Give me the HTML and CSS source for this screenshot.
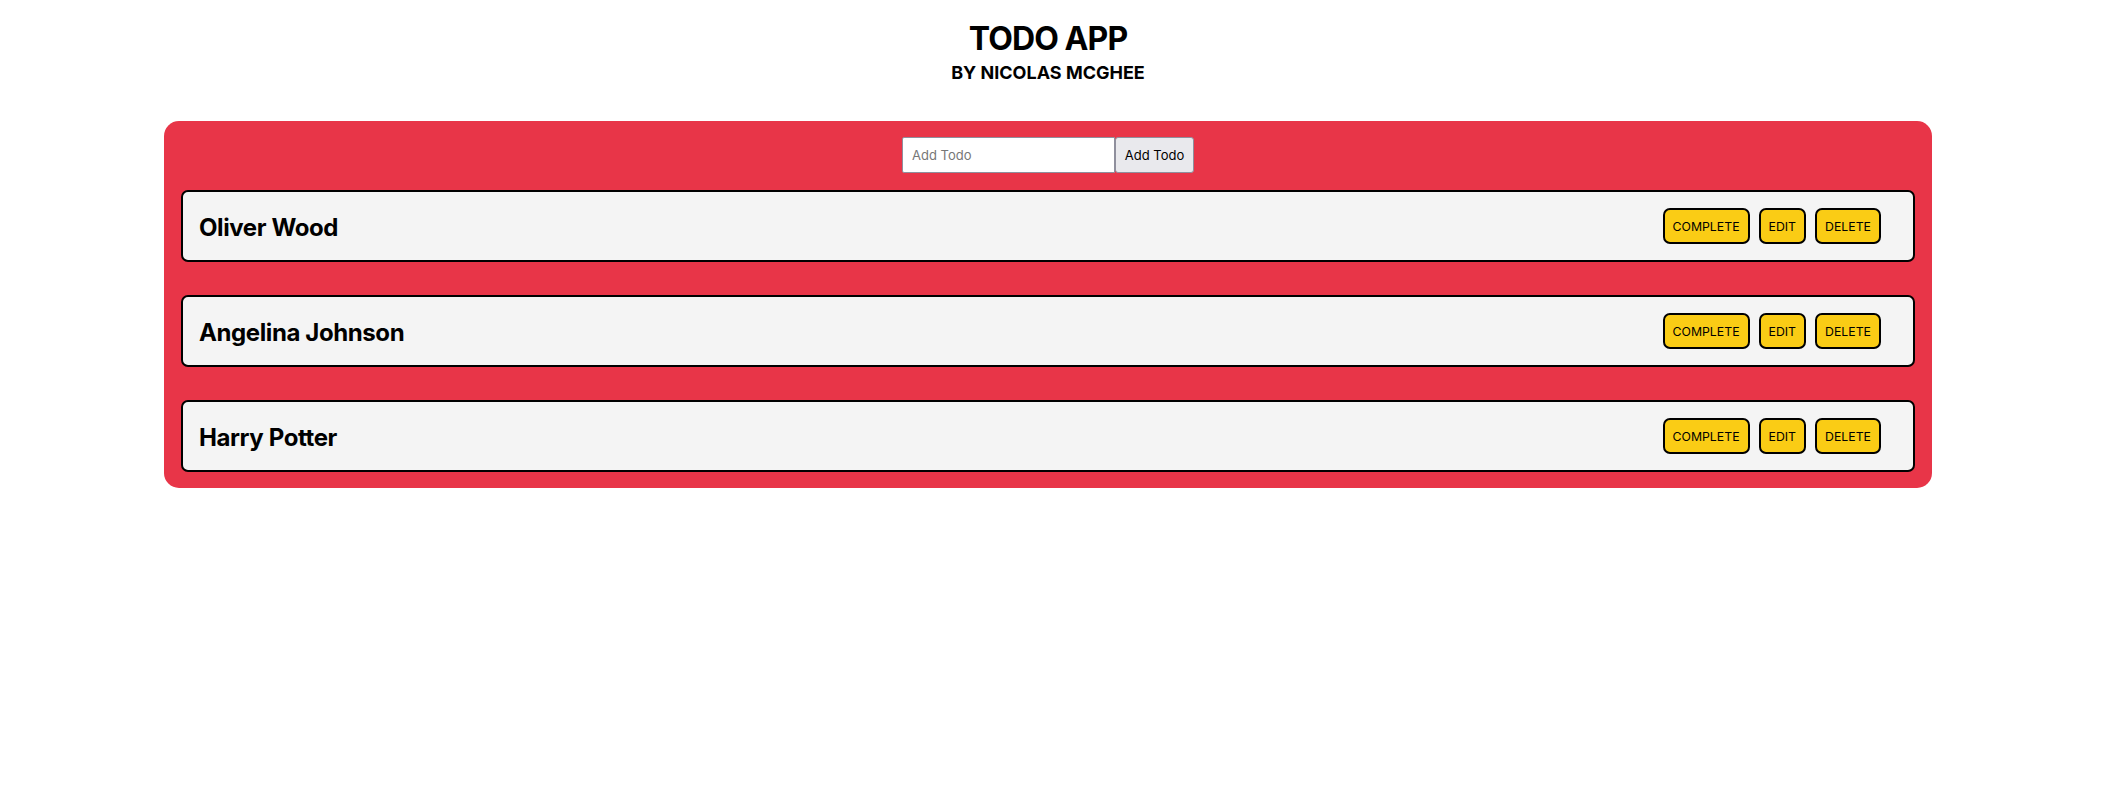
FILE: index.html
```html
<!DOCTYPE html>
<html lang="en">
<head>
<meta charset="utf-8">
<title>Todo App</title>
<link rel="stylesheet" href="styles.css">
</head>
<body>
<div class="page">
  <header class="header">
    <h1 class="title">TODO APP</h1>
    <h3 class="subtitle">BY NICOLAS MCGHEE</h3>
  </header>
  <main class="board">
    <form class="add-form">
      <input class="add-input" type="text" placeholder="Add Todo">
      <button class="add-btn" type="button">Add Todo</button>
    </form>
    <ul class="todo-list">
      <li class="todo">
        <h2 class="todo-name">Oliver Wood</h2>
        <div class="actions">
          <button class="act" type="button">COMPLETE</button>
          <button class="act" type="button">EDIT</button>
          <button class="act" type="button">DELETE</button>
        </div>
      </li>
      <li class="todo">
        <h2 class="todo-name">Angelina Johnson</h2>
        <div class="actions">
          <button class="act" type="button">COMPLETE</button>
          <button class="act" type="button">EDIT</button>
          <button class="act" type="button">DELETE</button>
        </div>
      </li>
      <li class="todo">
        <h2 class="todo-name">Harry Potter</h2>
        <div class="actions">
          <button class="act" type="button">COMPLETE</button>
          <button class="act" type="button">EDIT</button>
          <button class="act" type="button">DELETE</button>
        </div>
      </li>
    </ul>
  </main>
</div>
</body>
</html>
```
FILE: styles.css
```css
* { box-sizing: border-box; }

body {
  margin: 0;
  font-family: Inter, "Open Sans", sans-serif;
  color: #000;
  background: #fff;
}

.page {
  width: 2096px;
  padding-top: 20px;
}

.header {
  text-align: center;
}

.title {
  margin: 0;
  font-size: 32px;
  line-height: 38px;
  font-weight: 700;
  letter-spacing: -0.9px;
}

.subtitle {
  margin: 4px 0 0;
  font-size: 18px;
  line-height: 22px;
  font-weight: 700;
}

.board {
  width: 1768px;
  margin: 37px auto 0;
  background: #e83548;
  border-radius: 15px;
  padding: 16px 17px 16px;
}

.add-form {
  display: flex;
  justify-content: center;
  margin-bottom: 17px;
}

.add-input {
  width: 213px;
  height: 36px;
  border: 1px solid #8f8f9d;
  border-radius: 2px 0 0 2px;
  padding: 0 9px;
  font-family: Inter, sans-serif;
  font-size: 13px;
  background: #fff;
}

.add-input::placeholder { color: #777; }

.add-btn {
  width: 79px;
  height: 36px;
  border: 1px solid #8f8f9d;
  border-radius: 3px;
  background: #e9e9ed;
  font-family: Inter, sans-serif;
  font-size: 13px;
  color: #000;
  padding: 0;
}

.todo-list {
  list-style: none;
  margin: 0;
  padding: 0;
  display: flex;
  flex-direction: column;
  gap: 33px;
}

.todo {
  height: 72px;
  display: flex;
  align-items: center;
  justify-content: space-between;
  background: #f4f4f4;
  border: 2px solid #000;
  border-radius: 7px;
  padding: 2px 32px 0 16px;
}

.todo-name {
  margin: 0;
  font-size: 24px;
  font-weight: 700;
  letter-spacing: -0.4px;
}

.actions {
  display: flex;
  gap: 9px;
  margin-top: -2px;
}

.act {
  height: 36px;
  background: #facc15;
  border: 2px solid #000;
  border-radius: 7px;
  padding: 0 8px;
  font-family: Inter, sans-serif;
  font-size: 12.3px;
  color: #000;
}
```
